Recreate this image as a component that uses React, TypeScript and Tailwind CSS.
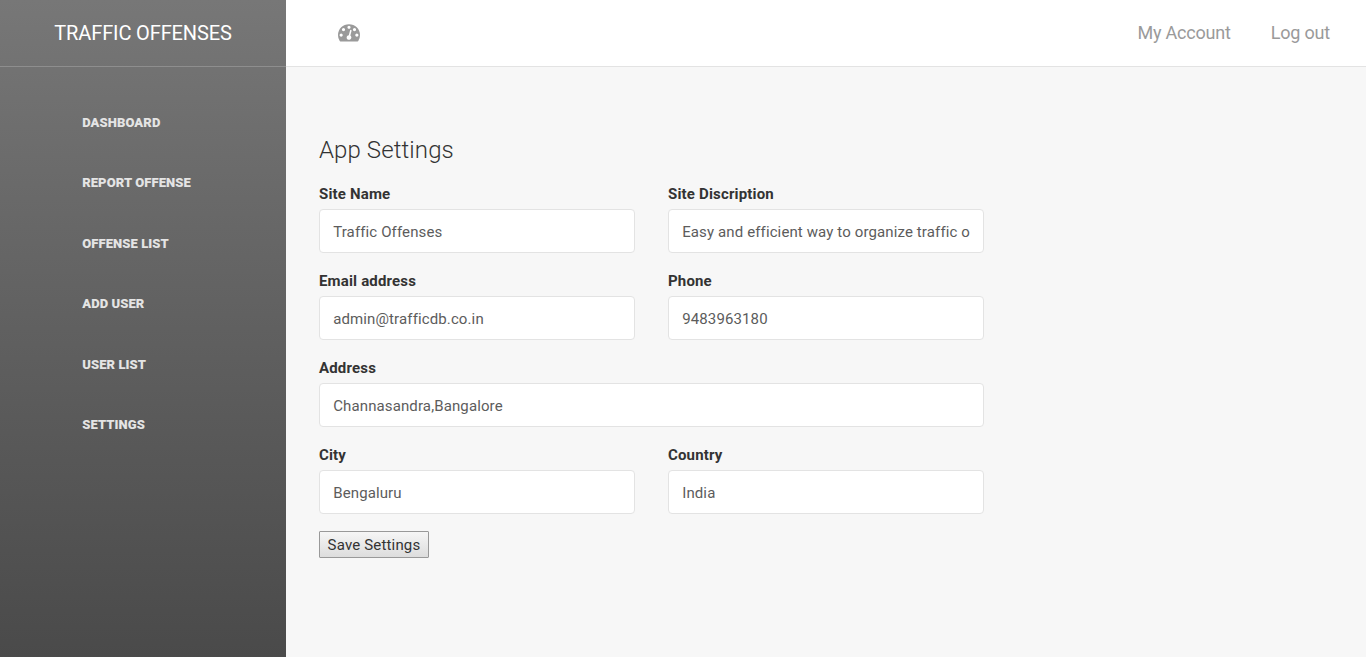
const NAV = ["Dashboard", "Report Offense", "Offense List", "Add User", "User List", "Settings"];

function GaugeIcon() {
  return (
    <svg viewBox="0 0 1792 1792" fill="currentColor" aria-hidden="true" className="mb-0.5 h-[22px] w-[22px] text-[#9a9a9a]">
      <path d="M384 1152q0-53-37.5-90.5t-90.5-37.5-90.5 37.5-37.5 90.5 37.5 90.5 90.5 37.5 90.5-37.5 37.5-90.5zm192-448q0-53-37.5-90.5t-90.5-37.5-90.5 37.5-37.5 90.5 37.5 90.5 90.5 37.5 90.5-37.5 37.5-90.5zm428 481l101-382q6-26-7.5-48.5t-38.5-29.5-48 6.5-30 39.5l-101 382q-60 5-107 43.5t-63 98.5q-20 77 20 146t117 89 146-20 89-117q16-60-6-117t-72-91zm660-33q0-53-37.5-90.5t-90.5-37.5-90.5 37.5-37.5 90.5 37.5 90.5 90.5 37.5 90.5-37.5 37.5-90.5zm-640-640q0-53-37.5-90.5t-90.5-37.5-90.5 37.5-37.5 90.5 37.5 90.5 90.5 37.5 90.5-37.5 37.5-90.5zm448 192q0-53-37.5-90.5t-90.5-37.5-90.5 37.5-37.5 90.5 37.5 90.5 90.5 37.5 90.5-37.5 37.5-90.5zm320 448q0 261-141 483-19 29-54 29h-1402q-35 0-54-29-141-221-141-483 0-182 71-348t191-286 286-191 348-71 348 71 286 191 191 286 71 348z" />
    </svg>
  );
}

function Field({ label, value, wide }: { label: string; value: string; wide?: boolean }) {
  return (
    <label className={wide ? "col-span-2 block" : "block"}>
      <span className="block h-[26px] text-[15px] leading-[22px] font-bold tracking-[0.17px] text-[#333333]">{label}</span>
      <input
        type="text"
        defaultValue={value}
        className="block h-11 w-full rounded-[4px] border border-[#e3e3e3] bg-white px-[13.2px] pt-0.5 text-[15px] tracking-[0.12px] text-[#5c5c5c] outline-none"
      />
    </label>
  );
}

export default function App() {
  return (
    <div className="flex h-[657px] w-full overflow-hidden bg-[#f7f7f7] font-['Roboto',sans-serif]">
      <aside className="w-[286px] shrink-0 bg-linear-to-b from-[#777777] to-[#4a4a4a]">
        <div className="flex h-[67px] items-center justify-center border-b border-[#8e8e8e] text-[20px] tracking-[-0.13px] text-white">
          TRAFFIC OFFENSES
        </div>
        <nav className="flex flex-col pt-[40px] pl-[82.2px]">
          {NAV.map((n) => (
            <a key={n} className="h-[60.4px] pt-[1px] text-[13px] leading-[30px] font-black tracking-[0.09px] text-[#e4e4e4] uppercase">{n}</a>
          ))}
        </nav>
      </aside>
      <main className="flex-1">
        <header className="flex h-[67px] items-center justify-between border-b border-[#e3e3e3] bg-white pr-9 pl-[52px]">
          <GaugeIcon />
          <div className="flex gap-10 pb-0.5 text-[18px] tracking-[-0.2px] text-[#9a9a9a]">
            <a>My Account</a>
            <a>Log out</a>
          </div>
        </header>
        <section className="w-[698px] pt-[66px] pl-[33px]">
          <h3 className="h-[50px] text-[24px] leading-[34px] font-light tracking-[0.1px] text-[#333333]">App Settings</h3>
          <div className="grid grid-cols-2 gap-x-[33px] gap-y-[17px]">
            <Field label="Site Name" value="Traffic Offenses" />
            <Field label="Site Discription" value="Easy and efficient way to organize traffic offenses" />
            <Field label="Email address" value="admin@trafficdb.co.in" />
            <Field label="Phone" value="9483963180" />
            <Field label="Address" value="Channasandra,Bangalore" wide />
            <Field label="City" value="Bengaluru" />
            <Field label="Country" value="India" />
          </div>
          <button className="mt-[17px] block h-[27px] w-[110px] rounded-[1px] border border-[#999999] bg-linear-to-b from-[#f6f6f6] to-[#dddddd] pt-px text-[15px] tracking-[0.17px] text-[#333333]">Save Settings</button>
        </section>
      </main>
    </div>
  );
}
